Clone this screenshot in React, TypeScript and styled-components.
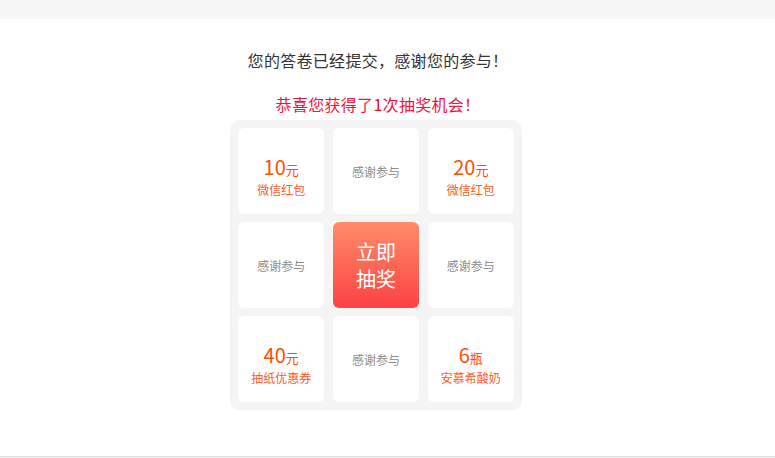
import styled, { createGlobalStyle } from "styled-components";

type Prize = {
  kind: "prize" | "thanks" | "start";
  amount?: string;
  unit?: string;
  label?: string;
};

const prizes: Prize[] = [
  { kind: "prize", amount: "10", unit: "元", label: "微信红包" },
  { kind: "thanks" },
  { kind: "prize", amount: "20", unit: "元", label: "微信红包" },
  { kind: "thanks" },
  { kind: "start" },
  { kind: "thanks" },
  { kind: "prize", amount: "40", unit: "元", label: "抽纸优惠券" },
  { kind: "thanks" },
  { kind: "prize", amount: "6", unit: "瓶", label: "安慕希酸奶" },
];

export default function App() {
  return (
    <>
      <GlobalStyle />
      <Page>
        <TopBar />
        <Main>
          <Column>
            <Notice>您的答卷已经提交，感谢您的参与！</Notice>
            <Congrats>
              恭喜您获得了<Count>1</Count>次抽奖机会！
            </Congrats>
            <Board>
              {prizes.map((p, i) =>
                p.kind === "start" ? (
                  <StartButton key={i}>
                    <StartLine>立即</StartLine>
                    <StartLine>抽奖</StartLine>
                  </StartButton>
                ) : p.kind === "thanks" ? (
                  <Cell key={i}>
                    <Thanks>感谢参与</Thanks>
                  </Cell>
                ) : (
                  <Cell key={i}>
                    <PrizeBlock>
                      <Amount>
                        {p.amount}
                        <Unit>{p.unit}</Unit>
                      </Amount>
                      <PrizeLabel>{p.label}</PrizeLabel>
                    </PrizeBlock>
                  </Cell>
                )
              )}
            </Board>
          </Column>
        </Main>
        <Footer />
      </Page>
    </>
  );
}

const GlobalStyle = createGlobalStyle`
  html, body {
    margin: 0;
    padding: 0;
    background: #fff;
    font-family: "Noto Sans CJK SC", "Noto Sans", sans-serif;
  }
`;

const Page = styled.div`
  display: flex;
  flex-direction: column;
  width: 775px;
  height: 458px;
  overflow: hidden;
`;

const TopBar = styled.div`
  height: 19px;
  background: #f7f7f7;
  flex-shrink: 0;
`;

const Main = styled.div`
  height: 437px;
  flex-shrink: 0;
  width: 752px;
  display: flex;
  justify-content: center;
`;

const Column = styled.div`
  display: flex;
  flex-direction: column;
  align-items: center;
  padding-top: 29px;
`;

const Notice = styled.div`
  font-size: 16px;
  line-height: 24px;
  color: #333;
  letter-spacing: 0.3px;
  padding-left: 4px;
`;

const Congrats = styled.div`
  margin-top: 20px;
  font-size: 16px;
  line-height: 24px;
  color: #f0143c;
  letter-spacing: 0.3px;
  padding-left: 4px;
`;

const Count = styled.span`
  color: #ff0022;
`;

const Board = styled.div`
  margin-top: 4px;
  width: 292px;
  height: 290px;
  box-sizing: border-box;
  padding: 8px;
  background: #f4f4f4;
  border-radius: 10px;
  display: grid;
  grid-template-columns: repeat(3, 1fr);
  grid-template-rows: repeat(3, 1fr);
  column-gap: 8.5px;
  row-gap: 8px;
`;

const Cell = styled.div`
  background: #fff;
  border-radius: 6px;
  display: flex;
  align-items: center;
  justify-content: center;
`;

const Thanks = styled.div`
  font-size: 12px;
  color: #8c8c8c;
`;

const PrizeBlock = styled.div`
  display: flex;
  flex-direction: column;
  align-items: center;
  padding-top: 12px;
  color: #ff4e00;
`;

const Amount = styled.div`
  font-size: 20px;
  line-height: 22px;
`;

const Unit = styled.span`
  font-size: 13px;
`;

const PrizeLabel = styled.div`
  font-size: 12px;
  line-height: 17px;
  color: #ff5a1f;
`;

const StartButton = styled.div`
  border-radius: 6px;
  background: linear-gradient(180deg, #ff8c6a 0%, #fc4242 100%);
  color: #fff;
  display: flex;
  flex-direction: column;
  align-items: center;
  justify-content: center;
  cursor: pointer;
`;

const StartLine = styled.div`
  font-size: 20px;
  line-height: 27px;
`;

const Footer = styled.div`
  flex: 1;
  border-top: 1px solid #dddddd;
  background: #f7f7f7;
`;
